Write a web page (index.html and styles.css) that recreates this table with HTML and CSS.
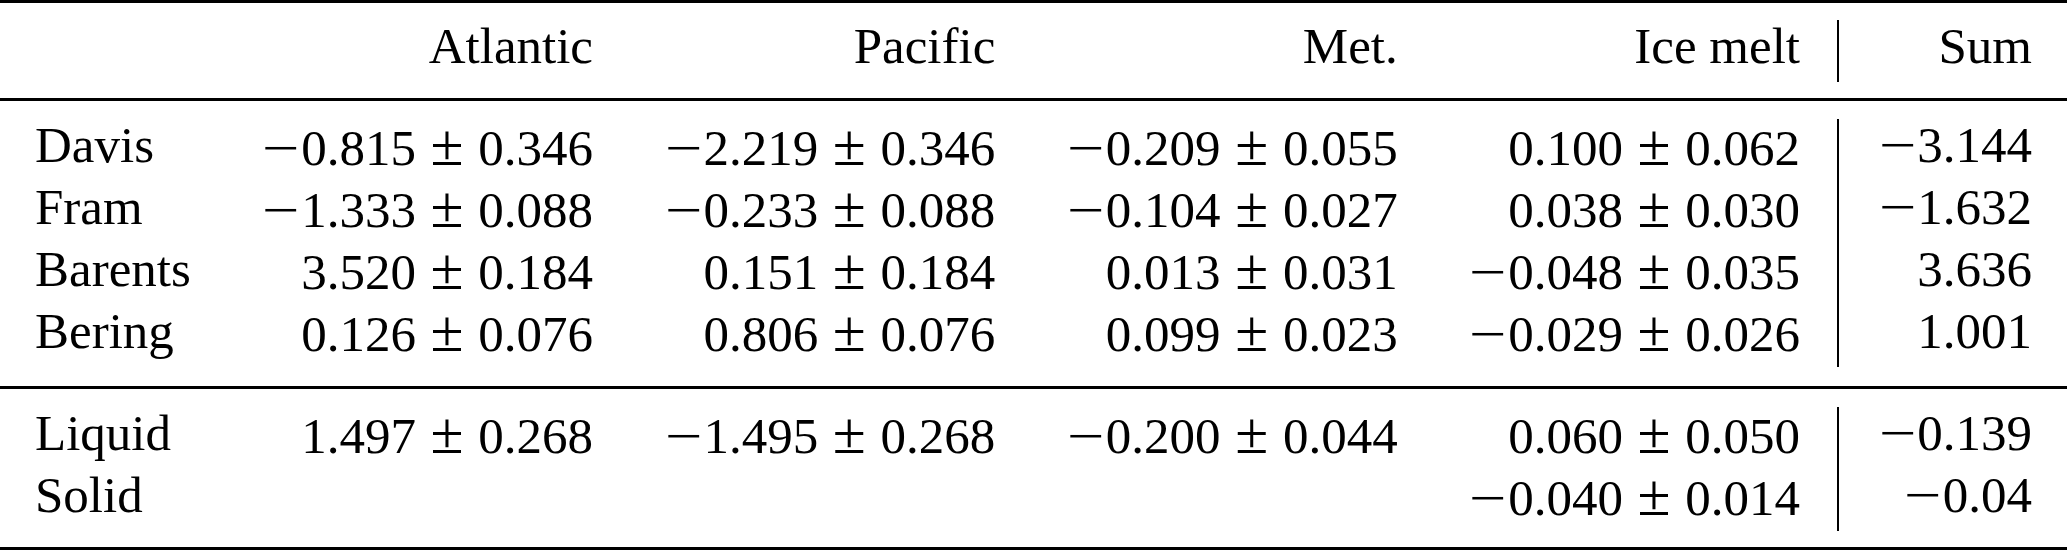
FILE: index.html
```html
<!DOCTYPE html>
<html lang="en">
<head>
<meta charset="utf-8">
<title>Freshwater transport table</title>
<link rel="stylesheet" href="styles.css">
</head>
<body>
<div class="table">
  <div class="rule heavy-top"></div>
  <div class="row head">
    <div class="cell label"></div>
    <div class="cell num">Atlantic</div>
    <div class="cell num">Pacific</div>
    <div class="cell num">Met.</div>
    <div class="cell num last">Ice melt</div>
    <div class="cell sum">Sum</div>
  </div>
  <div class="rule mid first-mid"></div>
  <div class="group">
    <div class="row">
      <div class="cell label">Davis</div>
      <div class="cell num"><span class="neg">−</span>0.815<span class="pm">±</span>0.346</div>
      <div class="cell num"><span class="neg">−</span>2.219<span class="pm">±</span>0.346</div>
      <div class="cell num"><span class="neg">−</span>0.209<span class="pm">±</span>0.055</div>
      <div class="cell num last">0.100<span class="pm">±</span>0.062</div>
      <div class="cell sum"><span class="neg">−</span>3.144</div>
    </div>
    <div class="row">
      <div class="cell label">Fram</div>
      <div class="cell num"><span class="neg">−</span>1.333<span class="pm">±</span>0.088</div>
      <div class="cell num"><span class="neg">−</span>0.233<span class="pm">±</span>0.088</div>
      <div class="cell num"><span class="neg">−</span>0.104<span class="pm">±</span>0.027</div>
      <div class="cell num last">0.038<span class="pm">±</span>0.030</div>
      <div class="cell sum"><span class="neg">−</span>1.632</div>
    </div>
    <div class="row">
      <div class="cell label">Barents</div>
      <div class="cell num">3.520<span class="pm">±</span>0.184</div>
      <div class="cell num">0.151<span class="pm">±</span>0.184</div>
      <div class="cell num">0.013<span class="pm">±</span>0.031</div>
      <div class="cell num last"><span class="neg">−</span>0.048<span class="pm">±</span>0.035</div>
      <div class="cell sum">3.636</div>
    </div>
    <div class="row">
      <div class="cell label">Bering</div>
      <div class="cell num">0.126<span class="pm">±</span>0.076</div>
      <div class="cell num">0.806<span class="pm">±</span>0.076</div>
      <div class="cell num">0.099<span class="pm">±</span>0.023</div>
      <div class="cell num last"><span class="neg">−</span>0.029<span class="pm">±</span>0.026</div>
      <div class="cell sum">1.001</div>
    </div>
  </div>
  <div class="rule mid second-mid"></div>
  <div class="group">
    <div class="row">
      <div class="cell label">Liquid</div>
      <div class="cell num">1.497<span class="pm">±</span>0.268</div>
      <div class="cell num"><span class="neg">−</span>1.495<span class="pm">±</span>0.268</div>
      <div class="cell num"><span class="neg">−</span>0.200<span class="pm">±</span>0.044</div>
      <div class="cell num last">0.060<span class="pm">±</span>0.050</div>
      <div class="cell sum"><span class="neg">−</span>0.139</div>
    </div>
    <div class="row">
      <div class="cell label">Solid</div>
      <div class="cell num"></div>
      <div class="cell num"></div>
      <div class="cell num"></div>
      <div class="cell num last"><span class="neg">−</span>0.040<span class="pm">±</span>0.014</div>
      <div class="cell sum"><span class="neg">−</span>0.04</div>
    </div>
  </div>
  <div class="rule heavy-bottom"></div>
</div>
</body>
</html>
```

FILE: styles.css
```css
html, body {
  margin: 0;
  padding: 0;
  background: #ffffff;
}

.table {
  width: 2067px;
  font-family: "Liberation Serif", "Times New Roman", serif;
  font-size: 51px;
  color: #000000;
}

.rule {
  background: #000000;
  width: 100%;
}

.heavy-top {
  height: 3px;
}

.head {
  margin-top: 16.6px;
}

.mid {
  height: 3px;
}

.first-mid {
  margin-top: 16px;
}

.second-mid {
  margin-top: 19px;
}

.group {
  margin-top: 18px;
}

.heavy-bottom {
  height: 3px;
  margin-top: 16.4px;
}

.row {
  display: grid;
  grid-template-columns: 250px 343px 402.3px 402.4px 439.3px 230px;
  height: 62px;
  line-height: 52.4px;
}

.cell {
  white-space: nowrap;
  box-sizing: border-box;
}

.label {
  padding-left: 35px;
  text-align: left;
}

.num {
  text-align: right;
}

.num.last {
  padding-right: 37px;
}

.sum {
  text-align: right;
  padding-right: 35px;
  border-left: 2px solid #000000;
}

.neg {
  display: inline-block;
  width: 0.778em;
  text-align: center;
  transform: scaleX(1.3);
}

.pm {
  display: inline-block;
  font-size: 1.18em;
  width: 1.036em;
  text-align: center;
}
```
